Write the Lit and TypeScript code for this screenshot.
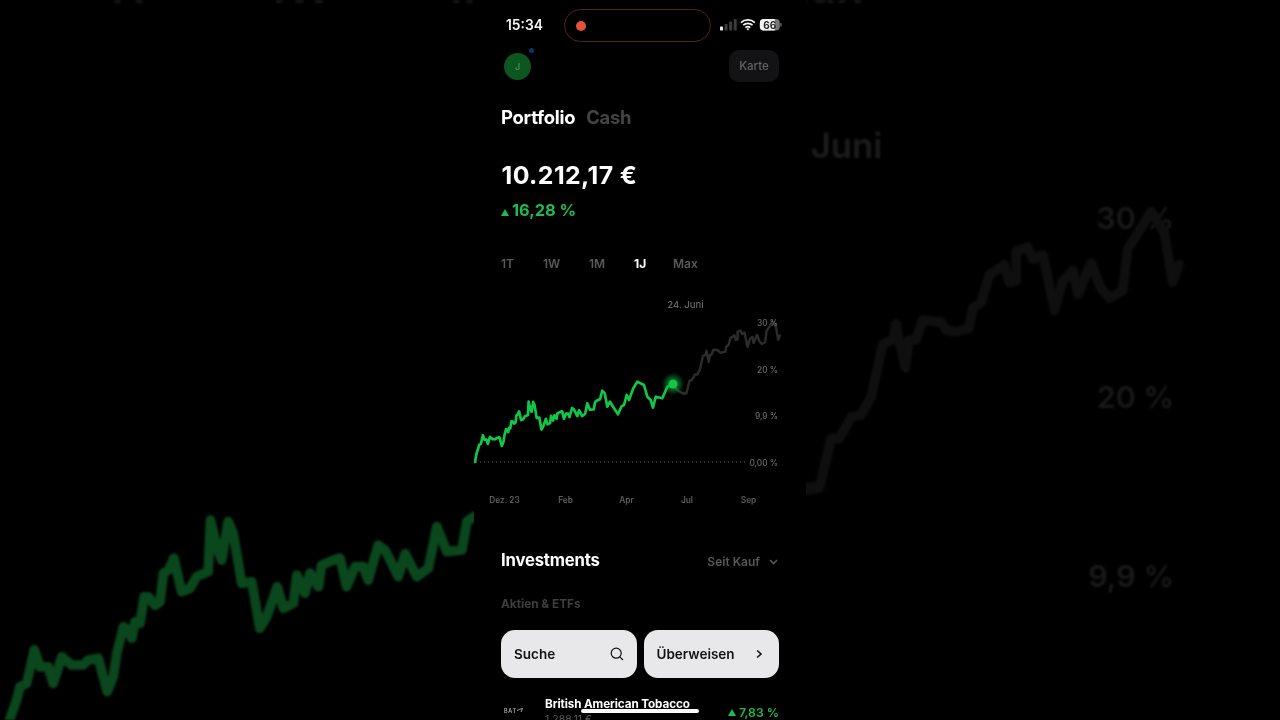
import { LitElement, html, css, svg } from "lit";
import { customElement } from "lit/decorators.js";

// The side panels show the same screen enlarged 3.855x about the page centre.
// Points were read from those enlargements, so they carry the line's finer detail.
const S = 3.855;
const fromLeft = (p: number[]) => [474 + p[0] / 3 / S, 360 + (400 + p[1] / 3 - 360) / S];
const fromRight = (p: number[]) => [474 + (806 + p[0] / 3) / S, 360 + (p[1] / 2.53 - 360) / S];
const fromMain = (p: number[]) => [474 + p[0] / 3, 240 + p[1] / 3];

const LEFT = [[30,955],[50,900],[60,860],[80,850],[103,750],[120,800],[145,800],[160,850],[185,770],[215,795],[250,795],[265,780],[295,775],[322,875],[340,830],[350,760],[370,680],[385,690],[395,715],[405,665],[420,670],[432,590],[445,590],[465,615],[480,605],[490,520],[505,510],[522,475],[545,575],[570,565],[590,530],[625,515],[632,360],[650,440],[665,480],[685,365],[700,400],[725,550],[755,545],[780,685],[800,650],[832,560],[850,625],[880,610],[890,525],[915,580],[930,520],[955,560],[965,495],[1000,480],[1020,475],[1040,560],[1065,500],[1090,500],[1105,540],[1135,435],[1155,450],[1195,530],[1215,460],[1250,530],[1285,505],[1310,380],[1340,455],[1385,450],[1400,365],[1422,350]];
const MID_GREEN = [[378,478],[385,452],[392,460],[400,500],[408,485],[418,502],[432,523],[442,500],[450,495],[458,465],[465,480],[478,445],[490,425],[510,435],[520,470],[530,480],[537,503],[545,470],[565,475],[580,440],[597,432]];
const MID_GRAY = [[597,432],[610,450],[625,460],[637,458]];
const RIGHT = [[0,1240],[40,1235],[75,1110],[100,1110],[135,1055],[165,1050],[195,1005],[230,870],[260,860],[270,820],[298,930],[310,860],[330,860],[350,810],[405,815],[420,835],[450,840],[490,830],[500,780],[525,765],[550,695],[595,670],[610,715],[630,710],[630,635],[665,625],[680,655],[710,645],[745,785],[770,710],[800,685],[815,745],[855,665],[885,730],[910,755],[950,735],[965,630],[995,590],[1035,535],[1075,590],[1100,715],[1118,670]];

const toPath = (pts: number[][]) =>
  pts.map((p, i) => `${i ? "L" : "M"}${p[0].toFixed(1)} ${p[1].toFixed(1)}`).join(" ");
const greenPath = toPath([[475, 462], ...LEFT.map(fromLeft), ...MID_GREEN.map(fromMain)]);
const grayPath = toPath([...MID_GRAY.map(fromMain), ...RIGHT.map(fromRight)]);

const axis = [
  { t: "30 %", y: 326 },
  { t: "20 %", y: 372.5 },
  { t: "9,9 %", y: 419 },
  { t: "0,00 %", y: 465.5 },
];
const months = [
  { t: "Dez. 23", x: 504.5 },
  { t: "Feb", x: 565.5 },
  { t: "Apr", x: 626.5 },
  { t: "Jul", x: 687 },
  { t: "Sep", x: 748.5 },
];
const ranges = ["1T", "1W", "1M", "1J", "Max"];

@customElement("app-root")
export class AppRoot extends LitElement {
  static styles = css`
    :host {
      display: block;
      position: relative;
      width: 1280px;
      height: 720px;
      overflow: hidden;
      background: #000;
      font-family: Inter, "Liberation Sans", sans-serif;
    }
    .backdrop {
      position: absolute;
      inset: 0;
      width: 1280px;
      height: 720px;
      filter: blur(1.2px);
    }
    .bg-line { fill: none; stroke-width: 2.5; stroke-linejoin: round; stroke-linecap: round; }
    .bg-green { stroke: #0a471d; }
    .bg-gray { stroke: #0f0f0f; }
    .bg-text { font-size: 7.9px; font-weight: 600; fill: #191919; text-anchor: end; }
    .bg-date { font-size: 9px; font-weight: 600; fill: #1c1c1c; text-anchor: middle; }
    .bg-range { font-size: 12px; font-weight: 600; fill: #181818; }

    .phone {
      position: relative;
      width: 332px;
      height: 720px;
      margin: 0 auto;
      background: #000;
      overflow: hidden;
      filter: blur(0.35px);
      color: #fff;
    }
    .status {
      height: 50px;
      box-sizing: border-box;
      padding: 9px 24px 0 32px;
      display: flex;
      align-items: flex-start;
    }
    .time { width: 58px; line-height: 32px; font-size: 13.8px; font-weight: 600; color: #f4f4f4; }
    .rec {
      width: 148px;
      height: 33px;
      box-sizing: border-box;
      border: 1.5px solid #5a201c;
      border-radius: 17px;
      display: flex;
      align-items: center;
      padding-left: 11px;
    }
    .rec i { width: 10px; height: 10px; border-radius: 50%; background: #e5523c; }
    .status-icons { margin-left: 9px; margin-top: 7px; display: block; }

    .header {
      height: 32px;
      padding: 0 27px 0 30px;
      display: flex;
      justify-content: space-between;
      align-items: center;
    }
    .avatar {
      position: relative;
      width: 27px;
      height: 27px;
      border-radius: 50%;
      background: #0c561f;
      color: #4f8a5d;
      font-size: 9px;
      font-weight: 600;
      display: flex;
      align-items: center;
      justify-content: center;
    }
    .avatar::after {
      content: "";
      position: absolute;
      right: -3px;
      top: -5px;
      width: 5px;
      height: 5px;
      border-radius: 50%;
      background: #10306c;
    }
    .card-btn {
      width: 50px;
      height: 32px;
      border-radius: 10px;
      background: #131315;
      color: #636363;
      font-size: 11.5px;
      font-weight: 500;
      display: flex;
      align-items: center;
      justify-content: center;
    }

    .tabs {
      height: 26px;
      margin-top: 22px;
      padding-left: 27px;
      display: flex;
      gap: 11px;
      align-items: center;
      font-size: 18.4px;
      font-weight: 700;
      letter-spacing: -0.25px;
    }
    .tabs .off { color: #444446; }

    .balance {
      height: 30px;
      margin-top: 30px;
      padding-left: 27.5px;
      line-height: 30px;
      font-size: 24.9px;
      font-weight: 700;
      letter-spacing: 0.4px;
    }
    .change {
      height: 20px;
      margin-top: 10px;
      padding-left: 27px;
      display: flex;
      align-items: center;
      gap: 3px;
      color: #1dbb52;
      font-size: 16.4px;
      font-weight: 700;
    }
    .tri { width: 8px; height: 7px; margin-top: 4px; display: block; fill: currentColor; }

    .ranges {
      height: 20px;
      margin-top: 33px;
      padding-left: 27px;
      display: flex;
      align-items: center;
      font-size: 12px;
      font-weight: 600;
      color: #5a5a5c;
    }
    .ranges span:nth-child(1) { width: 42px; }
    .ranges span:nth-child(2) { width: 46px; }
    .ranges span:nth-child(3) { width: 45px; }
    .ranges span:nth-child(4) { width: 39px; }
    .ranges .on { color: #fff; font-weight: 700; }

    .chart { display: block; width: 332px; height: 220px; margin-top: 17px; }
    .line { fill: none; stroke-linejoin: round; stroke-linecap: round; }
    .line-green { stroke: #12c649; stroke-width: 2.7; }
    .line-gray { stroke: #2c2c2e; stroke-width: 2.4; }
    .zero { stroke: #565656; stroke-width: 1; stroke-dasharray: 1 3; }
    .halo { fill: #10a53d; opacity: 0.6; filter: blur(2px); }
    .dot { fill: #12c649; }
    .date { font-size: 9.6px; font-weight: 500; fill: #666668; text-anchor: middle; }
    .tick { font-size: 8.3px; font-weight: 500; fill: #6a6a6c; text-anchor: end; }
    .month { font-size: 8.3px; font-weight: 600; fill: #5c5c5e; text-anchor: middle; }

    .inv-head {
      height: 28px;
      margin-top: 36px;
      padding: 0 28px 0 27px;
      display: flex;
      align-items: center;
      justify-content: space-between;
    }
    .inv-title { font-size: 16.7px; font-weight: 700; letter-spacing: -0.2px; }
    .since {
      display: flex;
      align-items: center;
      gap: 9px;
      padding-top: 3px;
      color: #58585a;
      font-size: 12px;
      font-weight: 600;
    }
    .since svg { display: block; }
    .sub {
      height: 20px;
      margin-top: 20px;
      padding-left: 27px;
      line-height: 20px;
      color: #3e3e40;
      font-size: 11.8px;
      font-weight: 700;
    }
    .actions {
      display: flex;
      gap: 7px;
      margin-top: 16px;
      padding: 0 27px;
    }
    .action {
      flex: 1;
      height: 48px;
      box-sizing: border-box;
      padding: 0 13px;
      border-radius: 14px;
      background: #e8e7ea;
      color: #111;
      font-size: 13.5px;
      font-weight: 600;
      display: flex;
      align-items: center;
      justify-content: space-between;
    }
    .action svg { display: block; }
    .row {
      display: flex;
      margin-top: 17px;
      padding: 0 27px 0 30px;
    }
    .logo {
      width: 41px;
      padding-top: 12px;
      display: flex;
      align-items: flex-start;
      height: 10px;
      font-size: 5.5px;
      line-height: 9px;
      font-weight: 500;
      color: #bbb;
      letter-spacing: 0.7px;
    }
    .logo svg { display: block; margin-top: 0; }
    .row-main { flex: 1; }
    .row-title { line-height: 18px; font-size: 11.7px; font-weight: 700; letter-spacing: -0.1px; }
    .row-sub { line-height: 14px; font-size: 10.5px; color: #5a5a5c; }
    .row-gain {
      display: flex;
      align-items: center;
      gap: 3px;
      height: 34px;
      color: #1dbb52;
      font-size: 12.2px;
      font-weight: 600;
    }
    .row-gain .tri { margin-top: 1px; }
    .home {
      position: absolute;
      left: 107px;
      top: 709px;
      width: 118px;
      height: 4px;
      border-radius: 2px;
      background: #fff;
    }
  `;

  render() {
    return html`
      <svg class="backdrop" viewBox="474 266.625 332 186.75" aria-hidden="true">
        ${ranges.map((r, i) => svg`<text class="bg-range" x=${[501, 543, 589, 634, 673][i]} y="267.5">${r}</text>`)}
        <text class="bg-date" x="685.5" y="307.5">24. Juni</text>
        ${axis.slice(0, 3).map((a) => svg`<text class="bg-text" x="778.5" y=${a.y}>${a.t}</text>`)}
        <path class="bg-line bg-green" d=${greenPath}></path>
        <path class="bg-line bg-gray" d=${grayPath}></path>
      </svg>

      <div class="phone">
        <div class="status">
          <div class="time">15:34</div>
          <div class="rec"><i></i></div>
          <svg class="status-icons" width="62" height="18" viewBox="0 0 62 18">
            <rect x="0" y="10.5" width="3" height="4" rx="0.7" fill="#eee"></rect>
            <rect x="4.6" y="8" width="3" height="6.500" rx="0.7" fill="#3c3c3e"></rect>
            <rect x="9.2" y="5.5" width="3" height="9" rx="0.7" fill="#3c3c3e"></rect>
            <rect x="13.8" y="3" width="3" height="11.5" rx="0.7" fill="#3c3c3e"></rect>
            <path d="M21 6.6a10.4 10.4 0 0 1 14 0M23.3 9.2a7 7 0 0 1 9.4 0M25.6 11.6a3.6 3.6 0 0 1 4.8 0" fill="none" stroke="#f2f2f2" stroke-width="1.7"></path>
            <path d="M26.6 12.9 28 14.6l1.4-1.7a2 2 0 0 0-2.8 0z" fill="#f2f2f2"></path>
            <rect x="40" y="3" width="20" height="11.5" rx="4" fill="#777"></rect>
            <path d="M44 3h11v11.5H44a4 4 0 0 1-4-4V7a4 4 0 0 1 4-4z" fill="#f2f2f2"></path>
            <rect x="60.6" y="7" width="1.2" height="3.6" rx="0.6" fill="#777"></rect>
            <text x="50" y="12.6" text-anchor="middle" font-size="10" font-weight="700" fill="#222">66</text>
          </svg>
        </div>

        <div class="header">
          <div class="avatar">J</div>
          <div class="card-btn">Karte</div>
        </div>

        <div class="tabs"><span>Portfolio</span><span class="off">Cash</span></div>
        <div class="balance">10.212,17 €</div>
        <div class="change">
          <svg class="tri" viewBox="0 0 8 7"><path d="M4 0l4 7H0z"></path></svg>
          <span>16,28 %</span>
        </div>
        <div class="ranges">
          ${ranges.map((r) => html`<span class=${r === "1J" ? "on" : ""}>${r}</span>`)}
        </div>

        <svg class="chart" viewBox="474 290 332 220">
          <line class="zero" x1="476" y1="462" x2="748" y2="462"></line>
          <path class="line line-gray" d=${grayPath}></path>
          <path class="line line-green" d=${greenPath}></path>
          <circle class="halo" cx="673" cy="384" r="8.5"></circle>
          <circle class="dot" cx="673" cy="384" r="4.5"></circle>
          <text class="date" x="685.5" y="307.5">24. Juni</text>
          ${axis.map((a) => svg`<text class="tick" x="778" y=${a.y}>${a.t}</text>`)}
          ${months.map((m) => svg`<text class="month" x=${m.x} y="503">${m.t}</text>`)}
        </svg>

        <div class="inv-head">
          <span class="inv-title">Investments</span>
          <span class="since">
            <span>Seit Kauf</span>
            <svg width="9" height="6" viewBox="0 0 9 6"><path d="M1 1l3.500 3.500L8 1" fill="none" stroke="#58585a" stroke-width="1.6"></path></svg>
          </span>
        </div>
        <div class="sub">Aktien &amp; ETFs</div>

        <div class="actions">
          <div class="action">
            <span>Suche</span>
            <svg width="14" height="14" viewBox="0 0 14 14"><circle cx="6.2" cy="6.2" r="5" fill="none" stroke="#111" stroke-width="1.2"></circle><path d="M9.800 9.800 13 13" stroke="#111" stroke-width="1.2" fill="none"></path></svg>
          </div>
          <div class="action">
            <span>Überweisen</span>
            <svg width="14" height="14" viewBox="0 0 14 14"><path d="M5.200 3.500 9 7l-3.800 3.500" fill="none" stroke="#111" stroke-width="1.6"></path></svg>
          </div>
        </div>

        <div class="row">
          <div class="logo">
            <span>BAT</span>
            <svg width="6" height="6" viewBox="0 0 6 6"><path d="M0 3.500C1.500 2.500 3.500 2 5.500 1.500L4 5" fill="none" stroke="#ccc" stroke-width="0.8"></path></svg>
          </div>
          <div class="row-main">
            <div class="row-title">British American Tobacco</div>
            <div class="row-sub">1.288,11 €</div>
          </div>
          <div class="row-gain">
            <svg class="tri" viewBox="0 0 8 7"><path d="M4 0l4 7H0z"></path></svg>
            <span>7,83 %</span>
          </div>
        </div>

        <div class="home"></div>
      </div>
    `;
  }
}
